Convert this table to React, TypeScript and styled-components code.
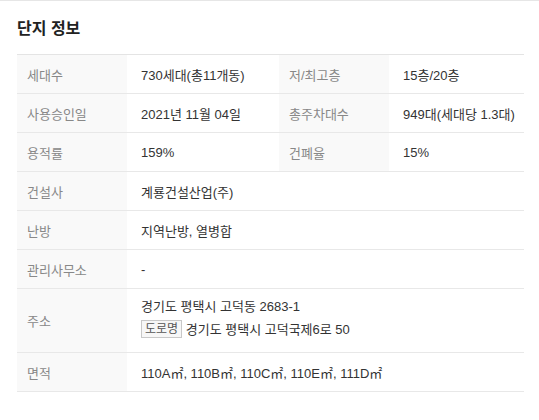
import styled, { createGlobalStyle } from "styled-components";

const GlobalStyle = createGlobalStyle`
  body {
    margin: 0;
    background: #fff;
    font-family: "Liberation Sans", "Noto Sans CJK KR", sans-serif;
    color: #333;
  }
`;

type Cell = { label: string; value: React.ReactNode };

const pairs: [Cell, Cell][] = [
  [
    { label: "세대수", value: "730세대(총11개동)" },
    { label: "저/최고층", value: "15층/20층" },
  ],
  [
    { label: "사용승인일", value: "2021년 11월 04일" },
    { label: "총주차대수", value: "949대(세대당 1.3대)" },
  ],
  [
    { label: "용적률", value: "159%" },
    { label: "건폐율", value: "15%" },
  ],
];

const singles: Cell[] = [
  { label: "건설사", value: "계룡건설산업(주)" },
  { label: "난방", value: "지역난방, 열병합" },
  { label: "관리사무소", value: "-" },
];

export default function App() {
  return (
    <>
      <GlobalStyle />
      <Section>
        <Title>단지 정보</Title>
        <Table>
          {pairs.map(([a, b]) => (
            <Row key={a.label}>
              <Label>{a.label}</Label>
              <Value>{a.value}</Value>
              <Label>{b.label}</Label>
              <Value>{b.value}</Value>
            </Row>
          ))}
          {singles.map((c) => (
            <Row key={c.label}>
              <Label>{c.label}</Label>
              <Value $wide>{c.value}</Value>
            </Row>
          ))}
          <Row>
            <Label>주소</Label>
            <Value $wide $tall>
              <Line>경기도 평택시 고덕동 2683-1</Line>
              <Line>
                <Badge>도로명</Badge> 경기도 평택시 고덕국제6로 50
              </Line>
            </Value>
          </Row>
          <Row>
            <Label>면적</Label>
            <Value $wide>110A㎡, 110B㎡, 110C㎡, 110E㎡, 111D㎡</Value>
          </Row>
        </Table>
      </Section>
    </>
  );
}

const Section = styled.section`
  border-top: 1px solid #e6e6e6;
  padding: 0 15px 0 17px;
`;

const Title = styled.h2`
  margin: 0;
  padding: 17px 0 14px;
  font-size: 16px;
  line-height: 22px;
  font-weight: 700;
  color: #222;
`;

const Table = styled.div`
  border-top: 1px solid #e4e4e4;
`;

const Row = styled.div`
  display: grid;
  grid-template-columns: 110px 152px 110px 1fr;
  border-bottom: 1px solid #e8e8e8;
`;

const Label = styled.div`
  display: flex;
  align-items: center;
  min-height: 38px;
  padding-left: 10px;
  background: #f9f9f9;
  font-size: 13px;
  color: #888;
`;

const Value = styled.div<{ $wide?: boolean; $tall?: boolean }>`
  display: flex;
  flex-direction: column;
  justify-content: center;
  min-height: 38px;
  padding: ${(p) => (p.$tall ? "6px 0 11px 14px" : "0 0 0 14px")};
  grid-column: ${(p) => (p.$wide ? "2 / 5" : "auto")};
  font-size: 13px;
  color: #333;
`;

const Line = styled.div`
  line-height: 23px;
`;

const Badge = styled.span`
  display: inline-block;
  box-sizing: border-box;
  height: 18px;
  padding: 0 3px;
  line-height: 16px;
  border: 1px solid #c8c8c8;
  background: #f7f7f7;
  font-size: 12px;
  color: #555;
  vertical-align: 1px;
`;
